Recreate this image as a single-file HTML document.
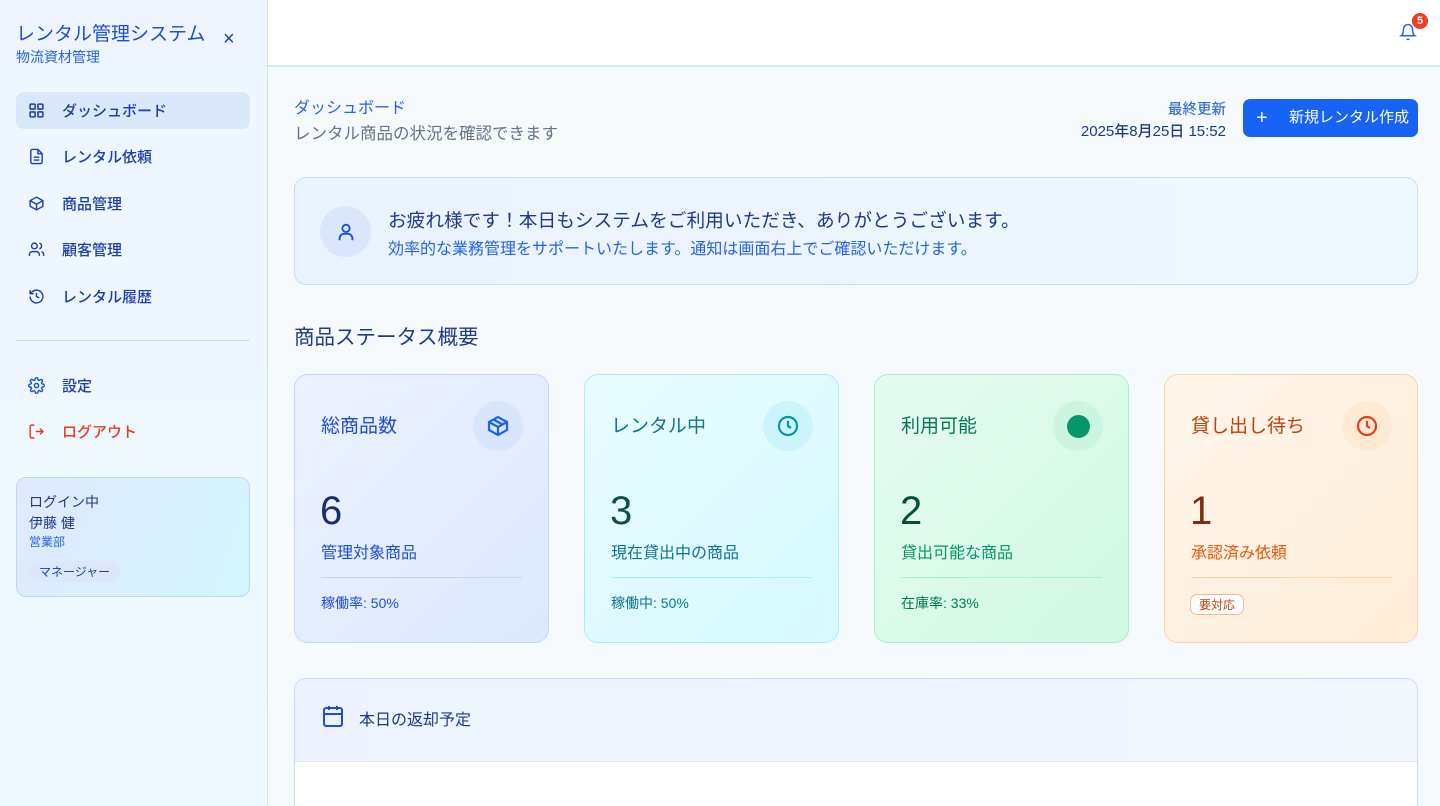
<!DOCTYPE html>
<html><head><meta charset="utf-8"><style>
*{box-sizing:border-box;margin:0;padding:0}
html{width:1440px;height:806px;overflow:hidden}
body{width:1440px;height:806px;overflow:hidden;font-family:"Liberation Sans","Noto Sans CJK JP",sans-serif;background:#f7fafd;position:relative}
.sb{position:absolute;left:0;top:0;width:268px;height:806px;background:linear-gradient(180deg,#eef5ff,#eefaff);border-right:1px solid #d3e2f5}
.abs{position:absolute}
.nav{position:absolute;left:16px;width:234px;height:37px;border-radius:8px;display:flex;align-items:center;font-size:15px;color:#1e40af;font-weight:500}
.nav svg{position:absolute;left:12px}
.nav span{position:absolute;left:46px}
.hdr{position:absolute;left:268px;top:0;right:0;height:67px;background:#fff;border-bottom:2px solid #d6e6fb}
.card{position:absolute;top:374px;width:255px;height:269px;border-radius:14px;border:1.5px solid}
.card .t{position:absolute;left:26px;top:36px;font-size:19px}
.card .ic{position:absolute;right:25px;top:26px;width:50px;height:50px;border-radius:50%;display:flex;align-items:center;justify-content:center}
.card .n{position:absolute;left:25px;top:114px;font-size:40px}
.card .s{position:absolute;left:26px;top:164px;font-size:16px}
.card .hr{position:absolute;left:26px;right:26px;top:202px;height:1px}
.card .f{position:absolute;left:26px;top:218px;font-size:14px}
</style></head><body>
<div class="sb">
 <div class="abs" style="left:16px;top:19px;font-size:19px;color:#1d4ed8">レンタル管理システム</div>
 <div class="abs" style="left:16px;top:47px;font-size:14px;color:#2563eb">物流資材管理</div>
 <div class="abs" style="left:223px;top:28px;font-size:20px;color:#1e40af">×</div>
 <div class="nav" style="top:92px;background:#dbe8fc"><svg width="17" height="17" viewBox="0 0 24 24" fill="none" stroke="#1e40af" stroke-width="2.2"><rect x="3" y="3" width="7" height="7" rx="1"/><rect x="14" y="3" width="7" height="7" rx="1"/><rect x="3" y="14" width="7" height="7" rx="1"/><rect x="14" y="14" width="7" height="7" rx="1"/></svg><span>ダッシュボード</span></div>
 <div class="nav" style="top:138px"><svg width="17" height="17" viewBox="0 0 24 24" fill="none" stroke="#1e40af" stroke-width="2"><path d="M14 2H6a2 2 0 0 0-2 2v16a2 2 0 0 0 2 2h12a2 2 0 0 0 2-2V8z"/><path d="M14 2v6h6M8 13h8M8 17h8"/></svg><span>レンタル依頼</span></div>
 <div class="nav" style="top:185px"><svg width="17" height="17" viewBox="0 0 24 24" fill="none" stroke="#1e40af" stroke-width="2"><path d="M21 8l-9-5-9 5v8l9 5 9-5z"/><path d="M3 8l9 5 9-5M12 13v8"/></svg><span>商品管理</span></div>
 <div class="nav" style="top:231px"><svg width="17" height="17" viewBox="0 0 24 24" fill="none" stroke="#1e40af" stroke-width="2"><circle cx="9" cy="7" r="4"/><path d="M2 21v-2a4 4 0 0 1 4-4h6a4 4 0 0 1 4 4v2M16 3.1a4 4 0 0 1 0 7.8M22 21v-2a4 4 0 0 0-3-3.9"/></svg><span>顧客管理</span></div>
 <div class="nav" style="top:278px"><svg width="17" height="17" viewBox="0 0 24 24" fill="none" stroke="#1e40af" stroke-width="2"><path d="M3 12a9 9 0 1 0 3-6.7L3 8"/><path d="M3 3v5h5M12 7v5l4 2"/></svg><span>レンタル履歴</span></div>
 <div class="abs" style="left:16px;top:340px;width:234px;height:1px;background:#cfdcef"></div>
 <div class="nav" style="top:367px"><svg width="17" height="17" viewBox="0 0 24 24" fill="none" stroke="#1d4ed8" stroke-width="2"><circle cx="12" cy="12" r="3"/><path d="M19.4 15a1.7 1.7 0 0 0 .3 1.8l.1.1a2 2 0 1 1-2.8 2.8l-.1-.1a1.7 1.7 0 0 0-1.8-.3 1.7 1.7 0 0 0-1 1.5V21a2 2 0 1 1-4 0v-.1a1.7 1.7 0 0 0-1.1-1.5 1.7 1.7 0 0 0-1.8.3l-.1.1a2 2 0 1 1-2.8-2.8l.1-.1a1.7 1.7 0 0 0 .3-1.8 1.7 1.7 0 0 0-1.5-1H3a2 2 0 1 1 0-4h.1a1.7 1.7 0 0 0 1.5-1.1 1.7 1.7 0 0 0-.3-1.8l-.1-.1a2 2 0 1 1 2.8-2.8l.1.1a1.7 1.7 0 0 0 1.8.3H9a1.7 1.7 0 0 0 1-1.5V3a2 2 0 1 1 4 0v.1a1.7 1.7 0 0 0 1 1.5 1.7 1.7 0 0 0 1.8-.3l.1-.1a2 2 0 1 1 2.8 2.8l-.1.1a1.7 1.7 0 0 0-.3 1.8V9a1.7 1.7 0 0 0 1.5 1H21a2 2 0 1 1 0 4h-.1a1.7 1.7 0 0 0-1.5 1z"/></svg><span>設定</span></div>
 <div class="nav" style="top:413px;color:#ea3a1a"><svg width="17" height="17" viewBox="0 0 24 24" fill="none" stroke="#ea3a1a" stroke-width="2"><path d="M9 21H5a2 2 0 0 1-2-2V5a2 2 0 0 1 2-2h4"/><path d="M11 12h10M17 8l4 4-4 4"/></svg><span>ログアウト</span></div>
 <div class="abs" style="left:16px;top:477px;width:234px;height:120px;border-radius:10px;border:1.5px solid #bcd7f7;background:linear-gradient(110deg,#dfe9fd,#d3f5ff)">
  <div class="abs" style="left:12px;top:14px;font-size:14px;color:#1e3a8a">ログイン中</div>
  <div class="abs" style="left:12px;top:35px;font-size:14px;color:#1e3a8a">伊藤 健</div>
  <div class="abs" style="left:12px;top:55px;font-size:12px;color:#2563eb">営業部</div>
  <div class="abs" style="left:12px;top:83px;padding:2px 10px;border-radius:10px;background:#dde7fb;font-size:12px;color:#1e40af">マネージャー</div>
 </div>
</div>
<div class="hdr">
 <svg class="abs" style="left:1131px;top:23px" width="18" height="18" viewBox="0 0 24 24" fill="none" stroke="#2563eb" stroke-width="2"><path d="M6 8a6 6 0 0 1 12 0c0 7 3 9 3 9H3s3-2 3-9M10.3 21a1.9 1.9 0 0 0 3.4 0"/></svg>
 <div class="abs" style="left:1144px;top:13px;width:16px;height:16px;border-radius:50%;background:#ef3b1f;color:#fff;font-size:11px;font-weight:700;text-align:center;line-height:16px">5</div>
</div>
<div class="abs" style="left:294px;top:94px;font-size:16px;color:#2563eb">ダッシュボード</div>
<div class="abs" style="left:294px;top:120px;font-size:16.5px;color:#64748b">レンタル商品の状況を確認できます</div>
<div class="abs" style="right:214px;top:98px;font-size:14.5px;color:#3b6fd8;text-align:right;font-weight:500">最終更新</div>
<div class="abs" style="right:214px;top:120px;font-size:15px;color:#1e3a8a;text-align:right;font-weight:500">2025年8月25日 15:52</div>
<div class="abs" style="left:1243px;top:99px;width:175px;height:38px;border-radius:7px;background:#1763f5;color:#fff;font-size:15px;line-height:38px"><span style="position:absolute;left:13px;font-size:20px">+</span><span style="position:absolute;left:46px">新規レンタル作成</span></div>
<div class="abs" style="left:294px;top:177px;width:1124px;height:108px;border-radius:12px;border:1.5px solid #c7dcf7;background:linear-gradient(90deg,#eaf2ff,#eef9ff)">
 <div class="abs" style="left:25px;top:28px;width:51px;height:51px;border-radius:50%;background:#d9e6fc;display:flex;align-items:center;justify-content:center"><svg width="22" height="22" viewBox="0 0 24 24" fill="none" stroke="#1d4ed8" stroke-width="2"><circle cx="12" cy="8" r="4"/><path d="M5 21v-2a5 5 0 0 1 5-5h4a5 5 0 0 1 5 5v2"/></svg></div>
 <div class="abs" style="left:93px;top:28px;font-size:18.7px;color:#1e3a8a">お疲れ様です！本日もシステムをご利用いただき、ありがとうございます。</div>
 <div class="abs" style="left:93px;top:57px;font-size:16px;color:#2563eb">効率的な業務管理をサポートいたします。通知は画面右上でご確認いただけます。</div>
</div>
<div class="abs" style="left:294px;top:320px;font-size:20.5px;color:#1e3a8a">商品ステータス概要</div>

<div class="card" style="left:294px;border-color:#c2d6f8;background:linear-gradient(135deg,#ecf1fe,#dde8fd)">
 <div class="t" style="color:#1d4ed8">総商品数</div>
 <div class="ic" style="background:#d8e5fc"><svg width="24" height="24" viewBox="0 0 24 24" fill="none" stroke="#1763f5" stroke-width="2.2"><path d="M21 8l-9-5-9 5v8l9 5 9-5z"/><path d="M3 8l9 5 9-5M12 13v8M7.5 5.5l9 5"/></svg></div>
 <div class="n" style="color:#172f6e">6</div><div class="s" style="color:#1d4ed8">管理対象商品</div>
 <div class="hr" style="background:#bfd4f6"></div><div class="f" style="color:#1d4ed8">稼働率: 50%</div>
</div>
<div class="card" style="left:584px;border-color:#a5eef8;background:linear-gradient(135deg,#e9fdff,#d5f8fe)">
 <div class="t" style="color:#0e7490">レンタル中</div>
 <div class="ic" style="background:#cbf4fb"><svg width="24" height="24" viewBox="0 0 24 24" fill="none" stroke="#0891b2" stroke-width="2.2"><circle cx="12" cy="12" r="9"/><path d="M12 7v5l3 2"/></svg></div>
 <div class="n" style="color:#134e4a">3</div><div class="s" style="color:#0e7490">現在貸出中の商品</div>
 <div class="hr" style="background:#a5eef8"></div><div class="f" style="color:#0e7490">稼働中: 50%</div>
</div>
<div class="card" style="left:874px;border-color:#a7efcd;background:linear-gradient(135deg,#e4fbef,#d1f8e4)">
 <div class="t" style="color:#047857">利用可能</div>
 <div class="ic" style="background:#cbf5e0"><div style="width:23px;height:23px;border-radius:50%;background:#059669"></div></div>
 <div class="n" style="color:#064e3b">2</div><div class="s" style="color:#059669">貸出可能な商品</div>
 <div class="hr" style="background:#a7efcd"></div><div class="f" style="color:#047857">在庫率: 33%</div>
</div>
<div class="card" style="left:1164px;width:254px;border-color:#fdd3aa;background:linear-gradient(135deg,#fff6ea,#ffecd8)">
 <div class="t" style="color:#c2410c">貸し出し待ち</div>
 <div class="ic" style="background:#feead3"><svg width="24" height="24" viewBox="0 0 24 24" fill="none" stroke="#ea3a1a" stroke-width="2.2"><circle cx="12" cy="12" r="9"/><path d="M12 7v5l3 2"/></svg></div>
 <div class="n" style="color:#7c2d12">1</div><div class="s" style="color:#ea580c">承認済み依頼</div>
 <div class="hr" style="background:#fdd3aa"></div>
 <div class="abs" style="left:25px;top:219px;padding:1px 8px;border:1.5px solid #fbb98a;border-radius:7px;background:#fff;font-size:12px;color:#c2410c">要対応</div>
</div>
<div class="abs" style="left:294px;top:678px;width:1124px;height:140px;border-radius:12px;border:1.5px solid #c7dcf7;background:#fff;overflow:hidden">
 <div style="height:83px;background:linear-gradient(90deg,#edf3fe,#f3f8ff);border-bottom:1px solid #dbe6f6"></div>
 <svg class="abs" style="left:26px;top:25px" width="24" height="24" viewBox="0 0 24 24" fill="none" stroke="#1d4ed8" stroke-width="2"><rect x="3" y="4" width="18" height="18" rx="2"/><path d="M16 2v4M8 2v4M3 10h18"/></svg>
 <div class="abs" style="left:64px;top:27px;font-size:16px;color:#1e3a8a">本日の返却予定</div>
</div>
</body></html>
